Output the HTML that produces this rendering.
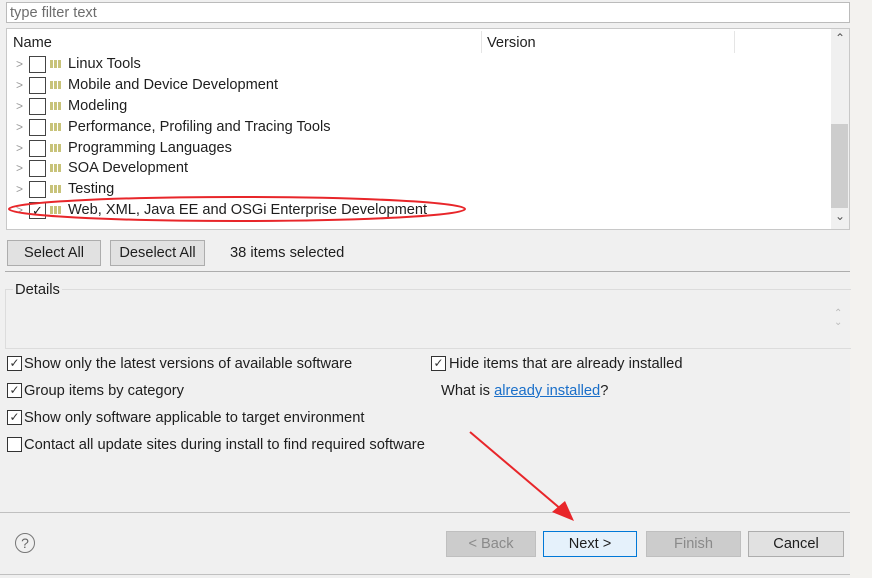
<!DOCTYPE html>
<html><head><meta charset="utf-8"><style>
body{margin:0;width:872px;height:578px;background:#f0f0f0;font-family:"Liberation Sans",sans-serif;font-size:14.6px;color:#1e1e1e;position:relative;overflow:hidden}
.a{position:absolute}
.strip{left:850px;top:0;width:22px;height:578px;background:#f3f2ef}
.box{background:#fff;border:1px solid #c8c8c8}
.row{position:absolute;left:0;height:21px;line-height:21px;width:820px}
.row .ar{position:absolute;left:9px;color:#999;font-size:12px}
.row .cb{position:absolute;left:22px;top:2px;width:15px;height:15px;border:1px solid #444;background:#fff}
.row .ic{position:absolute;left:43px;top:6px;width:13px;height:8px;display:flex;gap:1px}
.row .ic i{display:block;width:3px;height:8px;background:#c8c37a}
.row .t{position:absolute;left:61px}
.btn{position:absolute;height:24px;line-height:25px;text-align:center;background:#e1e1e1;border:1px solid #adadad;font-size:14.6px}
.ck{position:absolute;width:13px;height:13px;border:1px solid #333;background:#fff;font-size:12px;line-height:13px;text-align:center;color:#333}
.lbl{position:absolute;line-height:17px;font-size:14.7px}
</style></head><body>
<div class="a strip"></div>
<div class="a box" style="left:6px;top:2px;width:842px;height:19px;border-color:#bbb"><span style="position:absolute;left:3px;top:2px;color:#6d6d6d">type filter text</span></div>
<div class="a box" style="left:6px;top:28px;width:842px;height:200px;overflow:hidden">
 <div class="a" style="left:6px;top:6px">Name</div>
 <div class="a" style="left:474px;top:2px;width:1px;height:22px;background:#e5e5e5"></div>
 <div class="a" style="left:480px;top:6px">Version</div>
 <div class="a" style="left:727px;top:2px;width:1px;height:22px;background:#e5e5e5"></div>
 <div class="a" style="left:824px;top:0;width:18px;height:200px;background:#f0f0f0"></div>
 <div class="a" style="left:824px;top:95px;width:17px;height:84px;background:#cdcdcd"></div>
 <div class="a" style="left:828px;top:2px;font-size:12px;color:#555">&#8963;</div>
 <div class="a" style="left:828px;top:180px;font-size:12px;color:#555">&#8964;</div>
 <div class="row" style="top:25px"><span class="ar">&gt;</span><span class="cb"></span><span class="ic"><i></i><i></i><i></i></span><span class="t">Linux Tools</span></div>
 <div class="row" style="top:46px"><span class="ar">&gt;</span><span class="cb"></span><span class="ic"><i></i><i></i><i></i></span><span class="t">Mobile and Device Development</span></div>
 <div class="row" style="top:67px"><span class="ar">&gt;</span><span class="cb"></span><span class="ic"><i></i><i></i><i></i></span><span class="t">Modeling</span></div>
 <div class="row" style="top:88px"><span class="ar">&gt;</span><span class="cb"></span><span class="ic"><i></i><i></i><i></i></span><span class="t">Performance, Profiling and Tracing Tools</span></div>
 <div class="row" style="top:109px"><span class="ar">&gt;</span><span class="cb"></span><span class="ic"><i></i><i></i><i></i></span><span class="t">Programming Languages</span></div>
 <div class="row" style="top:129px"><span class="ar">&gt;</span><span class="cb"></span><span class="ic"><i></i><i></i><i></i></span><span class="t">SOA Development</span></div>
 <div class="row" style="top:150px"><span class="ar">&gt;</span><span class="cb"></span><span class="ic"><i></i><i></i><i></i></span><span class="t">Testing</span></div>
 <div class="row" style="top:171px"><span class="ar">&gt;</span><span class="cb" style="text-align:center;line-height:15px;font-size:13px">&#10003;</span><span class="ic"><i></i><i></i><i></i></span><span class="t">Web, XML, Java EE and OSGi Enterprise Development</span></div>
</div>
<div class="btn" style="left:7px;top:240px;width:92px">Select All</div>
<div class="btn" style="left:110px;top:240px;width:93px">Deselect All</div>
<div class="lbl" style="left:230px;top:245px">38 items selected</div>
<div class="a" style="left:5px;top:271px;width:845px;height:1px;background:#adadad"></div>
<div class="a" style="left:5px;top:289px;width:845px;height:58px;border:1px solid #dcdcdc;border-right:none"></div>
<div class="lbl" style="left:13px;top:282px;background:#f0f0f0;padding:0 2px">Details</div>
<div class="a" style="left:834px;top:309px;color:#bbb;font-size:10px;line-height:9px">&#8963;<br>&#8964;</div>
<div class="ck" style="left:7px;top:356px">&#10003;</div><div class="lbl" style="left:24px;top:356px">Show only the latest versions of available software</div>
<div class="ck" style="left:7px;top:383px">&#10003;</div><div class="lbl" style="left:24px;top:383px">Group items by category</div>
<div class="ck" style="left:7px;top:410px">&#10003;</div><div class="lbl" style="left:24px;top:410px">Show only software applicable to target environment</div>
<div class="ck" style="left:7px;top:437px"></div><div class="lbl" style="left:24px;top:437px">Contact all update sites during install to find required software</div>
<div class="ck" style="left:431px;top:356px">&#10003;</div><div class="lbl" style="left:449px;top:356px">Hide items that are already installed</div>
<div class="lbl" style="left:441px;top:383px">What is <span style="color:#1a6fc9;text-decoration:underline">already installed</span>?</div>
<div class="a" style="left:0;top:512px;width:850px;height:1px;background:#c0c0c0"></div>
<div class="a" style="left:15px;top:533px;width:18px;height:18px;border:1px solid #777;border-radius:50%;text-align:center;line-height:18px;color:#666;font-size:14px">?</div>
<div class="btn" style="left:446px;top:531px;width:88px;background:#ccc;border-color:#bfbfbf;color:#8a8a8a">&lt; Back</div>
<div class="btn" style="left:543px;top:531px;width:92px;border:1px solid #0078d7;background:#e5f1fb">Next &gt;</div>
<div class="btn" style="left:646px;top:531px;width:93px;background:#ccc;border-color:#bfbfbf;color:#8a8a8a">Finish</div>
<div class="btn" style="left:748px;top:531px;width:94px">Cancel</div>
<div class="a" style="left:0;top:574px;width:850px;height:1px;background:#c0c0c0"></div>
<svg class="a" style="left:0;top:0" width="872" height="578">
<ellipse cx="237" cy="209" rx="228" ry="12" fill="none" stroke="#e8262a" stroke-width="2"/>
<line x1="470" y1="432" x2="562" y2="510" stroke="#e8262a" stroke-width="2"/>
<polygon points="574,521 552,512 565,501" fill="#e8262a"/>
</svg>
</body></html>
